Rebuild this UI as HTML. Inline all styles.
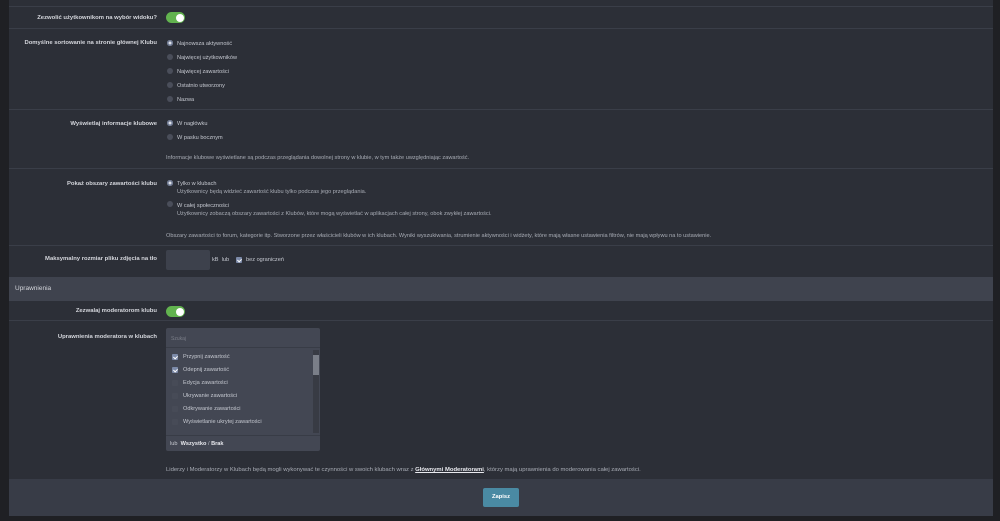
<!DOCTYPE html>
<html><head><meta charset="utf-8"><style>
*{margin:0;padding:0;box-sizing:border-box}
body{width:1000px;height:521px;background:#1f2024;font-family:"Liberation Sans",sans-serif;font-size:5.6px;color:#c5c8d0;position:relative;overflow:hidden}
.main{position:absolute;left:9px;top:0;width:984px;height:516px;background:#2c2f37}
.a{position:absolute;white-space:nowrap}
.sep{position:absolute;left:9px;width:984px;height:1px;background:#3a3e48}
.lbl{position:absolute;right:843px;font-weight:bold;color:#d4d6dc;white-space:nowrap;text-align:right;font-size:5.9px}
.rad{position:absolute;width:6px;height:6px;border-radius:50%;background:#4a4e5a}
.rad.on{background:#dfe3ea;box-shadow:inset 0 0 0 1.5px #6b7690}
.tog{position:absolute;width:19px;height:11px;border-radius:6px;background:#62b34f}
.tog::after{content:"";position:absolute;right:1.5px;top:1.5px;width:8px;height:8px;border-radius:50%;background:#fff}
.note{color:#a8acb5;font-size:5.6px}
.cb{position:absolute;width:6px;height:6px;border-radius:1px;background:#4a4e5a}
.cb.on{background:#7c8aa8}
.cb.on::after{content:"";position:absolute;left:1.7px;top:1px;width:2px;height:3px;border:solid #fff;border-width:0 1px 1px 0;transform:rotate(45deg)}
</style></head><body>
<div class="main"></div>
<div class="sep" style="top:6px"></div>
<div class="lbl" style="top:15px">Zezwolić użytkownikom na wybór widoku?</div>
<div class="tog" style="left:166px;top:12px"></div>
<div class="sep" style="top:28px"></div>
<div class="lbl" style="top:40px">Domyślne sortowanie na stronie głównej Klubu</div>
<div class="rad on" style="left:167px;top:40px"></div><div class="a" style="left:177px;top:41px">Najnowsza aktywność</div>
<div class="rad" style="left:167px;top:54px"></div><div class="a" style="left:177px;top:55px">Najwięcej użytkowników</div>
<div class="rad" style="left:167px;top:68px"></div><div class="a" style="left:177px;top:69px">Najwięcej zawartości</div>
<div class="rad" style="left:167px;top:82px"></div><div class="a" style="left:177px;top:83px">Ostatnio utworzony</div>
<div class="rad" style="left:167px;top:96px"></div><div class="a" style="left:177px;top:97px">Nazwa</div>
<div class="sep" style="top:109px"></div>
<div class="lbl" style="top:121px">Wyświetlaj informacje klubowe</div>
<div class="rad on" style="left:167px;top:120px"></div><div class="a" style="left:177px;top:121px">W nagłówku</div>
<div class="rad" style="left:167px;top:134px"></div><div class="a" style="left:177px;top:135px">W pasku bocznym</div>
<div class="a note" style="left:166px;top:155px">Informacje klubowe wyświetlane są podczas przeglądania dowolnej strony w klubie, w tym także uwzględniając zawartość.</div>
<div class="sep" style="top:168px"></div>
<div class="lbl" style="top:181px">Pokaż obszary zawartości klubu</div>
<div class="rad on" style="left:167px;top:180px"></div><div class="a" style="left:177px;top:181px">Tylko w klubach</div>
<div class="a note" style="left:177px;top:189px">Użytkownicy będą widzieć zawartość klubu tylko podczas jego przeglądania.</div>
<div class="rad" style="left:167px;top:201px"></div><div class="a" style="left:177px;top:203px">W całej społeczności</div>
<div class="a note" style="left:177px;top:211px">Użytkownicy zobaczą obszary zawartości z Klubów, które mogą wyświetlać w aplikacjach całej strony, obok zwykłej zawartości.</div>
<div class="a note" style="left:166px;top:233px">Obszary zawartości to forum, kategorie itp. Stworzone przez właścicieli klubów w ich klubach. Wyniki wyszukiwania, strumienie aktywności i widżety, które mają własne ustawienia filtrów, nie mają wpływu na to ustawienie.</div>
<div class="sep" style="top:245px"></div>
<div class="lbl" style="top:256px">Maksymalny rozmiar pliku zdjęcia na tło</div>
<div class="a" style="left:166px;top:250px;width:44px;height:20px;background:#3d414c;border-radius:2px"></div>
<div class="a" style="left:212px;top:257px">kB &nbsp;lub</div>
<div class="cb on" style="left:236px;top:257px"></div>
<div class="a" style="left:246px;top:257px">bez ograniczeń</div>
<div class="a" style="left:9px;top:277px;width:984px;height:24px;background:#3f434e"></div>
<div class="a" style="left:15px;top:285px;font-size:6.5px;color:#d4d6dc">Uprawnienia</div>
<div class="lbl" style="top:308px">Zezwalaj moderatorom klubu</div>
<div class="tog" style="left:166px;top:306px"></div>
<div class="sep" style="top:320px"></div>
<div class="lbl" style="top:334px">Uprawnienia moderatora w klubach</div>
<div class="a" style="left:166px;top:328px;width:154px;height:123px;background:#434753;border-radius:2px"></div>
<div class="a" style="left:166px;top:347px;width:154px;height:1px;background:#383c46"></div>
<div class="a" style="left:166px;top:435px;width:154px;height:1px;background:#383c46"></div>
<div class="a" style="left:171px;top:336px;color:#7a7e88;font-size:5px">Szukaj</div>
<div class="a" style="left:313px;top:350px;width:6px;height:83px;background:#383b44"></div>
<div class="a" style="left:313px;top:355px;width:6px;height:20px;background:#7a7e88"></div>
<div class="cb on" style="left:172px;top:354px"></div><div class="a" style="left:183px;top:354px">Przypnij zawartość</div>
<div class="cb on" style="left:172px;top:367px"></div><div class="a" style="left:183px;top:367px">Odepnij zawartość</div>
<div class="cb" style="left:172px;top:380px;background:#474b57"></div><div class="a" style="left:183px;top:380px">Edycja zawartości</div>
<div class="cb" style="left:172px;top:393px;background:#474b57"></div><div class="a" style="left:183px;top:393px">Ukrywanie zawartości</div>
<div class="cb" style="left:172px;top:406px;background:#474b57"></div><div class="a" style="left:183px;top:406px">Odkrywanie zawartości</div>
<div class="cb" style="left:172px;top:419px;background:#474b57"></div><div class="a" style="left:183px;top:419px">Wyświetlanie ukrytej zawartości</div>
<div class="a" style="left:170px;top:441px">lub &nbsp;<b style="color:#e8e9ee">Wszystko</b> / <b style="color:#e8e9ee">Brak</b></div>
<div class="a note" style="left:166px;top:467px;font-size:5.9px">Liderzy i Moderatorzy w Klubach będą mogli wykonywać te czynności w swoich klubach wraz z <b style="color:#e8e9ee;text-decoration:underline">Głównymi Moderatorami</b>, którzy mają uprawnienia do moderowania całej zawartości.</div>
<div class="a" style="left:9px;top:479px;width:984px;height:37px;background:#383c47"></div>
<div class="a" style="left:483px;top:488px;width:36px;height:19px;background:#4a8aa3;border-radius:2px;color:#fff;font-weight:bold;text-align:center;line-height:19px;font-size:5.8px">Zapisz</div>
</body></html>
